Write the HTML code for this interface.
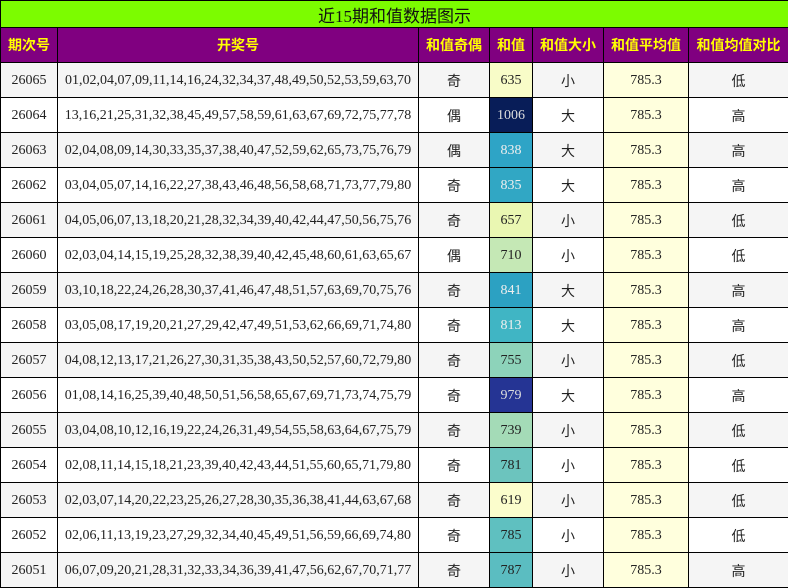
<!DOCTYPE html><html><head><meta charset="utf-8"><style>
body{margin:0;background:#fff;font-family:"Liberation Serif","Noto Sans CJK SC",serif;}
table{border-collapse:collapse;width:788px;table-layout:fixed;}
td,th{border:1px solid #000;text-align:center;padding:0;font-size:14px;color:#222;}
.t{background:#7cfc00;height:26px;font-size:17px;font-family:"Liberation Serif","Noto Sans CJK SC",serif;font-weight:normal;color:#111}
th.h{background:#800080;color:#ffff00;height:34px;font-family:"Liberation Sans","Noto Sans CJK SC",sans-serif;font-weight:bold;font-size:14px}
tr.r td{height:32px;padding-top:2px}
tr.r:nth-child(odd) td{background:#f5f5f5}
tr.r:nth-child(even) td{background:#fff}
td.c{font-family:"Liberation Sans","Noto Sans CJK SC",sans-serif}
tr.r td.a{background:#ffffdd}
td.n{font-size:14px;white-space:nowrap}
</style></head><body><table>
<colgroup><col style="width:57px"><col style="width:361px"><col style="width:71px"><col style="width:43px"><col style="width:71px"><col style="width:85px"><col style="width:100px"></colgroup>
<tr><th colspan="7" class="t">近15期和值数据图示</th></tr>
<tr><th class="h">期次号</th><th class="h">开奖号</th><th class="h">和值奇偶</th><th class="h">和值</th><th class="h">和值大小</th><th class="h">和值平均值</th><th class="h">和值均值对比</th></tr>
<tbody>
<tr class="r"><td>26065</td><td class="n">01,02,04,07,09,11,14,16,24,32,34,37,48,49,50,52,53,59,63,70</td><td class="c">奇</td><td style="background:#f8fcc8">635</td><td class="c">小</td><td class="a">785.3</td><td class="c">低</td></tr>
<tr class="r"><td>26064</td><td class="n">13,16,21,25,31,32,38,45,49,57,58,59,61,63,67,69,72,75,77,78</td><td class="c">偶</td><td style="background:#081d58;color:#ddd">1006</td><td class="c">大</td><td class="a">785.3</td><td class="c">高</td></tr>
<tr class="r"><td>26063</td><td class="n">02,04,08,09,14,30,33,35,37,38,40,47,52,59,62,65,73,75,76,79</td><td class="c">偶</td><td style="background:#2ea4c6;color:#eee">838</td><td class="c">大</td><td class="a">785.3</td><td class="c">高</td></tr>
<tr class="r"><td>26062</td><td class="n">03,04,05,07,14,16,22,27,38,43,46,48,56,58,68,71,73,77,79,80</td><td class="c">奇</td><td style="background:#31a7c4;color:#eee">835</td><td class="c">大</td><td class="a">785.3</td><td class="c">高</td></tr>
<tr class="r"><td>26061</td><td class="n">04,05,06,07,13,18,20,21,28,32,34,39,40,42,44,47,50,56,75,76</td><td class="c">奇</td><td style="background:#eaf7b2">657</td><td class="c">小</td><td class="a">785.3</td><td class="c">低</td></tr>
<tr class="r"><td>26060</td><td class="n">02,03,04,14,15,19,25,28,32,38,39,40,42,45,48,60,61,63,65,67</td><td class="c">偶</td><td style="background:#c5e8b5">710</td><td class="c">小</td><td class="a">785.3</td><td class="c">低</td></tr>
<tr class="r"><td>26059</td><td class="n">03,10,18,22,24,26,28,30,37,41,46,47,48,51,57,63,69,70,75,76</td><td class="c">奇</td><td style="background:#2ca1c2;color:#eee">841</td><td class="c">大</td><td class="a">785.3</td><td class="c">高</td></tr>
<tr class="r"><td>26058</td><td class="n">03,05,08,17,19,20,21,27,29,42,47,49,51,53,62,66,69,71,74,80</td><td class="c">奇</td><td style="background:#40b5c4;color:#eee">813</td><td class="c">大</td><td class="a">785.3</td><td class="c">高</td></tr>
<tr class="r"><td>26057</td><td class="n">04,08,12,13,17,21,26,27,30,31,35,38,43,50,52,57,60,72,79,80</td><td class="c">奇</td><td style="background:#8dd3ba">755</td><td class="c">小</td><td class="a">785.3</td><td class="c">低</td></tr>
<tr class="r"><td>26056</td><td class="n">01,08,14,16,25,39,40,48,50,51,56,58,65,67,69,71,73,74,75,79</td><td class="c">奇</td><td style="background:#253494;color:#ddd">979</td><td class="c">大</td><td class="a">785.3</td><td class="c">高</td></tr>
<tr class="r"><td>26055</td><td class="n">03,04,08,10,12,16,19,22,24,26,31,49,54,55,58,63,64,67,75,79</td><td class="c">奇</td><td style="background:#a4dbb7">739</td><td class="c">小</td><td class="a">785.3</td><td class="c">低</td></tr>
<tr class="r"><td>26054</td><td class="n">02,08,11,14,15,18,21,23,39,40,42,43,44,51,55,60,65,71,79,80</td><td class="c">奇</td><td style="background:#6cc4be">781</td><td class="c">小</td><td class="a">785.3</td><td class="c">低</td></tr>
<tr class="r"><td>26053</td><td class="n">02,03,07,14,20,22,23,25,26,27,28,30,35,36,38,41,44,63,67,68</td><td class="c">奇</td><td style="background:#fbfdcc">619</td><td class="c">小</td><td class="a">785.3</td><td class="c">低</td></tr>
<tr class="r"><td>26052</td><td class="n">02,06,11,13,19,23,27,29,32,34,40,45,49,51,56,59,66,69,74,80</td><td class="c">奇</td><td style="background:#5fc0c0">785</td><td class="c">小</td><td class="a">785.3</td><td class="c">低</td></tr>
<tr class="r"><td>26051</td><td class="n">06,07,09,20,21,28,31,32,33,34,36,39,41,47,56,62,67,70,71,77</td><td class="c">奇</td><td style="background:#5bbdc1">787</td><td class="c">小</td><td class="a">785.3</td><td class="c">高</td></tr>
</tbody></table></body></html>
